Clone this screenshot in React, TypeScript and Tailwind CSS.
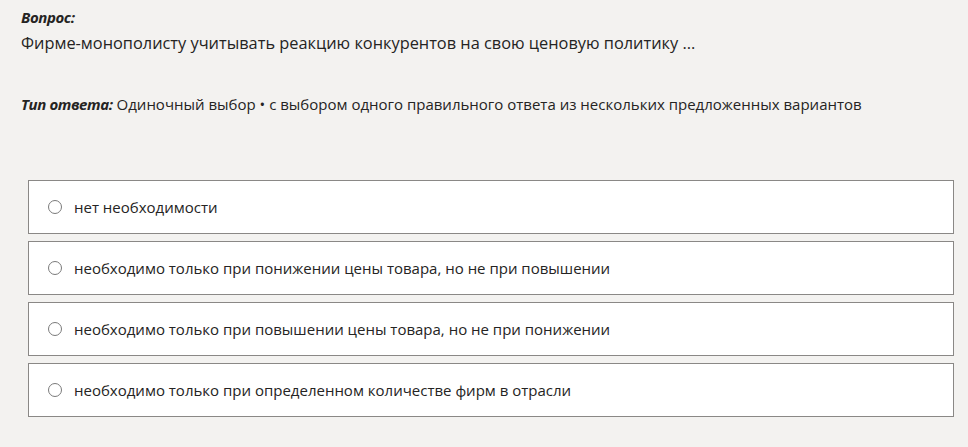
const options = [
  'нет необходимости',
  'необходимо только при понижении цены товара, но не при повышении',
  'необходимо только при повышении цены товара, но не при понижении',
  'необходимо только при определенном количестве фирм в отрасли',
];

export default function App() {
  return (
    <div
      className="min-h-[447px] w-full bg-[#f3f2f0] text-[#252423]"
      style={{ fontFamily: '"Open Sans", "Noto Sans", sans-serif' }}
    >
      <div className="px-[21px] pt-[7px]">
        {/* Question */}
        <div className="text-[15px] font-bold italic leading-[21px] tracking-[-0.4px]">Вопрос:</div>
        <div className="mt-[4px] text-[16.35px] leading-[22px]">
          Фирме-монополисту учитывать реакцию конкурентов на свою ценовую политику ...
        </div>

        {/* Answer type */}
        <div className="mt-[40px] text-[15px] leading-[21px]">
          <span className="font-bold italic tracking-[-0.4px]">Тип ответа:</span> Одиночный выбор • с выбором
          одного правильного ответа из нескольких предложенных вариантов
        </div>
      </div>

      {/* Options */}
      <div className="flex flex-col gap-[7px] pl-[28px] pr-[14px] pt-[65px]">
        {options.map((option) => (
          <label
            key={option}
            className="flex h-[54px] items-center gap-[12px] border border-[#8a8886] bg-white pl-[19px]"
          >
            <span className="h-[14px] w-[14px] shrink-0 rounded-full border border-[#7a7a7a] bg-white" />
            <span className="text-[15px] leading-[20px]">{option}</span>
          </label>
        ))}
      </div>
    </div>
  );
}
